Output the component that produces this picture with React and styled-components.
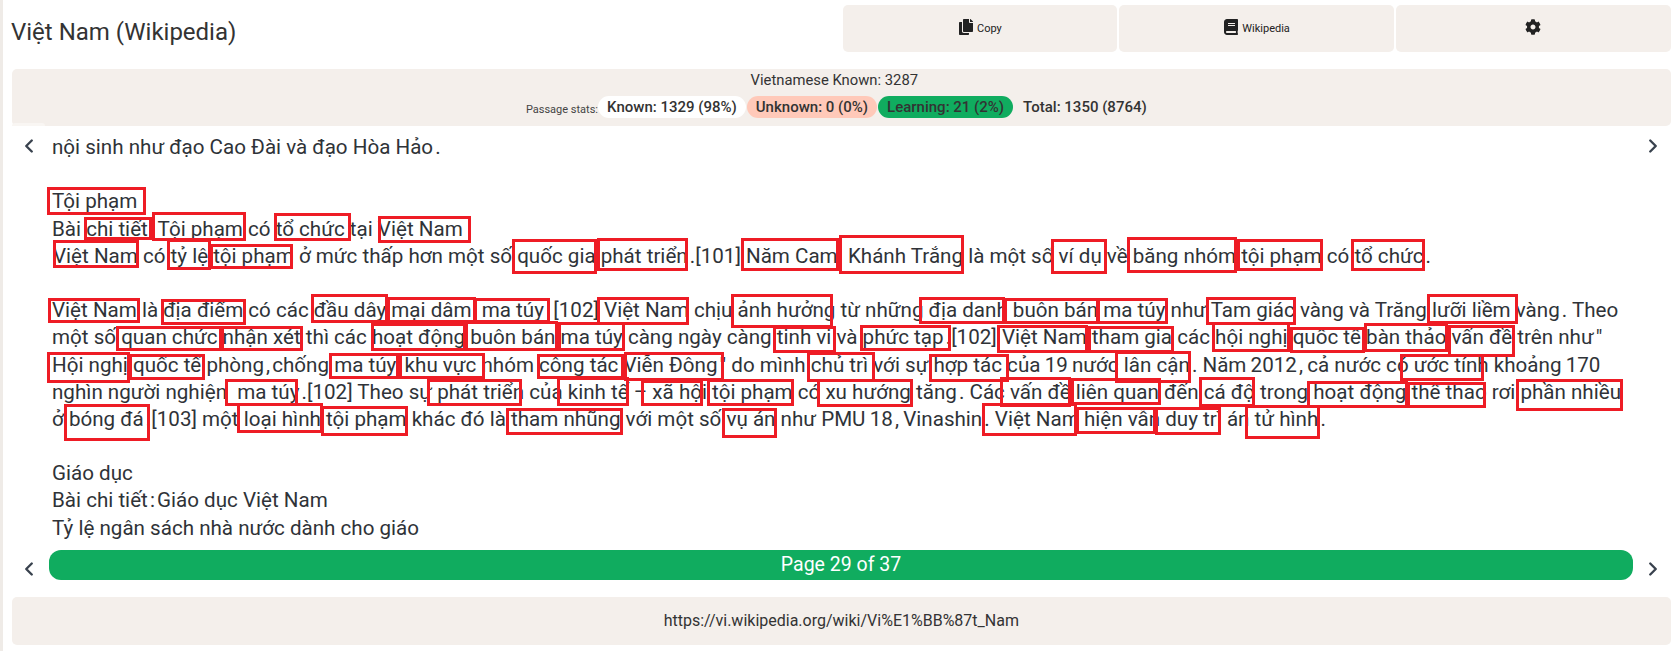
import styled, { createGlobalStyle } from "styled-components";
import { FaCopy, FaBook, FaCog } from "react-icons/fa";
import { ChevronLeft, ChevronRight } from "lucide-react";

const GlobalStyle = createGlobalStyle`
  html, body {
    margin: 0;
    padding: 0;
    background: #fff;
    font-family: Roboto, "Noto Sans", sans-serif;
    color: #2f3338;
  }
`;

const Page = styled.div`
  position: relative;
  width: 1675px;
  height: 651px;
  box-sizing: border-box;
  overflow: hidden;
  box-shadow: inset 3px 0 0 #efebe7;
  padding: 5px 4.4px 0 12px;
  display: flex;
  flex-direction: column;
`;

const Header = styled.header`
  display: flex;
  align-items: center;
  justify-content: space-between;
  height: 47px;
`;

const Title = styled.h1`
  margin: 0 0 -7px -1px;
  font-size: 24px;
  font-weight: 400;
  color: #333;
`;

const Actions = styled.div`
  display: flex;
  gap: 2px;
`;

const ActionButton = styled.button`
  width: 274.7px;
  height: 47px;
  padding: 0;
  border: 0;
  border-radius: 5px;
  background: #f4efeb;
  color: #222;
  font-family: inherit;
  font-size: 11px;
  display: flex;
  align-items: center;
  justify-content: center;
  gap: 3px;
  svg {
    font-size: 16px;
    margin-bottom: 4px;
  }
`;

const Stats = styled.section`
  position: relative;
  margin-top: 17px;
  height: 57px;
  border-radius: 5px;
  background: #f4efeb;
  display: flex;
  flex-direction: column;
  align-items: center;
  padding-top: 1px;
  box-sizing: border-box;
  &::after {
    content: "";
    position: absolute;
    left: 0;
    bottom: 0;
    width: 33px;
    height: 3px;
    border-radius: 3px 3px 0 0;
    background: #f9f6f3;
  }
`;

const KnownLine = styled.div`
  font-size: 14.8px;
  line-height: 20px;
  color: #333;
  margin-right: 14px;
`;

const PillRow = styled.div`
  display: flex;
  align-items: center;
  margin-top: 6px;
`;

const PillLabel = styled.span`
  font-size: 11px;
  color: #444;
  margin-top: 5px;
`;

const Pill = styled.span`
  height: 22px;
  padding: 0 9px;
  border-radius: 11px;
  background: ${(p) => p.$bg || "transparent"};
  font-size: 15px;
  font-weight: 500;
  line-height: 22px;
  margin-right: 1px;
  color: #333;
`;

const Reader = styled.div`
  display: flex;
  align-items: flex-start;
  flex: 1;
  min-height: 0;
`;

const Arrow = styled.div`
  width: ${(p) => (p.$side === "left" ? 37 : 37.6)}px;
  flex: none;
  display: flex;
  justify-content: center;
  color: #39424e;
  padding-top: ${(p) => p.$top || 0}px;
  padding-right: ${(p) => (p.$side === "left" ? 4 : 0)}px;
  padding-left: ${(p) => (p.$side === "right" ? 3 : 0)}px;
  box-sizing: border-box;
`;

const Passage = styled.div`
  flex: 1;
  min-width: 0;
  padding: 8px 0 0 3px;
  font-size: 20.6px;
  line-height: 27.2px;
`;

const Line = styled.div`
  white-space: pre;
  height: 27.2px;
  padding-left: ${(p) => p.$indent || 0}px;
`;

const PagerRow = styled.div`
  display: flex;
  align-items: center;
  height: 34px;
`;

const PageBar = styled.div`
  flex: 1;
  height: 30px;
  border-radius: 12px;
  background: #10ac5f;
  color: #fff;
  font-size: 19.5px;
  line-height: 30px;
  text-align: center;
  margin-top: -4px;
`;

const Footer = styled.footer`
  margin: 13px 0 6px;
  height: 48px;
  flex: none;
  border-radius: 5px;
  background: #f4efeb;
  font-size: 16px;
  color: #333;
  display: flex;
  align-items: center;
  justify-content: center;
  padding-bottom: 2px;
  box-sizing: border-box;
`;

// word boxes sit on top of the text, at the place the annotator drew them
const WordBox = styled.div`
  position: absolute;
  left: ${(p) => p.$x1}px;
  top: ${(p) => p.$y1}px;
  width: ${(p) => p.$x2 - p.$x1}px;
  height: ${(p) => p.$y2 - p.$y1}px;
  box-sizing: border-box;
  border: 3px solid #ee1c25;
  pointer-events: none;
`;

// the passage sets punctuation and numbers closer than a normal space
const hair = "\u200a";
const thin = "\u2009";

const lines = [
  { text: `nội sinh như đạo Cao Đài và đạo Hòa Hảo${hair}.` },
  { text: "" },
  { text: "Tội phạm" },
  { text: "Bài chi tiết  Tội phạm có tổ chức tại Việt Nam" },
  { text: `Việt Nam có tỷ lệ tội phạm ở mức thấp hơn một số quốc gia phát triển${hair}.[101] Năm Cam  Khánh Trắng là một số ví dụ về băng nhóm tội phạm có tổ chức${hair}.`, indent: 1 },
  { text: "" },
  { text: `Việt Nam là địa điểm có các đầu dây mại dâm  ma túy ${thin}[102] Việt Nam chịu ảnh hưởng từ những địa danh buôn bán ma túy như Tam giác vàng và Trăng lưỡi liềm vàng${hair}. Theo` },
  { text: `một số quan chức nhận xét thì các hoạt động buôn bán ma túy càng ngày càng tinh vi và phức tạp${hair}.[102] Việt Nam tham gia các hội nghị quốc tế bàn thảo vấn đề trên như${hair}"` },
  { text: `Hội nghị quốc tế phòng${hair},${hair}chống ma túy${hair},${hair}khu vực nhóm công tác Viễn Đông${hair}" do mình chủ trì với sự hợp tác của${thin}19${thin}nước lân cận${hair}. Năm${thin}2012${hair},${thin}cả nước có ước tính khoảng${thin}170` },
  { text: `nghìn người nghiện  ma túy${hair}.[102] Theo sự phát triển của kinh tế – xã hội tội phạm có xu hướng tăng${hair}. Các vấn đề liên quan đến cá độ trong hoạt động thể thao rơi phần nhiều` },
  { text: `ở bóng đá${hair}.[103] một loại hình tội phạm khác đó là tham nhũng với một số vụ án như PMU${thin}18${hair},${thin}Vinashin${hair}. Việt Nam${thin}hiện vẫn duy trì án tử hình${hair}.` },
  { text: "" },
  { text: "Giáo dục" },
  { text: `Bài chi tiết${hair}:${hair}Giáo dục Việt Nam` },
  { text: "Tỷ lệ ngân sách nhà nước dành cho giáo" },
];

// x1, y1, x2, y2 in page pixels
const boxes = [
  [47, 187, 146, 215], [84, 217, 152, 240], [152, 212, 246, 241], [274, 213, 351, 241], [378, 216, 471, 243],
  [53, 240, 139, 268], [167, 239, 211, 270], [210, 244, 293, 269], [512, 239, 597, 274], [597, 238, 688, 271],
  [741, 238, 839, 271], [839, 235, 964, 274], [1051, 239, 1107, 274], [1127, 237, 1237, 273], [1237, 239, 1323, 271], [1351, 239, 1425, 271],
  [48, 298, 140, 323], [161, 299, 246, 325], [311, 294, 388, 323], [387, 297, 476, 323], [474, 298, 550, 323],
  [597, 297, 689, 325], [731, 294, 833, 328], [919, 297, 1005, 324], [1004, 298, 1099, 324], [1097, 298, 1168, 324],
  [1206, 297, 1296, 325], [1427, 294, 1518, 324],
  [116, 326, 222, 351], [221, 326, 303, 351], [371, 323, 466, 351], [465, 321, 558, 351], [558, 322, 625, 351],
  [773, 326, 836, 353], [860, 325, 951, 351], [997, 325, 1088, 353], [1088, 326, 1174, 353], [1212, 322, 1290, 352],
  [1290, 327, 1365, 353], [1364, 323, 1448, 352], [1448, 325, 1515, 357],
  [47, 352, 130, 383], [129, 354, 205, 380], [329, 353, 399, 379], [399, 353, 485, 379], [537, 354, 624, 379],
  [624, 352, 724, 381], [807, 352, 875, 382], [929, 354, 1009, 382], [1115, 351, 1191, 383], [1400, 354, 1484, 381],
  [225, 379, 298, 406], [427, 379, 522, 406], [557, 377, 629, 406], [641, 380, 703, 406], [707, 379, 794, 406],
  [817, 379, 913, 407], [1000, 377, 1071, 407], [1071, 378, 1161, 405], [1199, 377, 1255, 407], [1307, 381, 1408, 408],
  [1407, 382, 1486, 408], [1516, 379, 1623, 411],
  [64, 404, 150, 441], [237, 403, 323, 433], [321, 406, 408, 436], [506, 408, 623, 435], [722, 408, 777, 438],
  [982, 403, 1077, 436], [1076, 407, 1156, 434], [1155, 407, 1221, 435], [1245, 405, 1320, 439],
];

export default function App() {
  return (
    <>
      <GlobalStyle />
      <Page>
        <Header>
          <Title>Việt Nam (Wikipedia)</Title>
          <Actions>
            <ActionButton>
              <FaCopy /> Copy
            </ActionButton>
            <ActionButton>
              <FaBook /> Wikipedia
            </ActionButton>
            <ActionButton>
              <FaCog />
            </ActionButton>
          </Actions>
        </Header>
        <Stats>
          <KnownLine>Vietnamese Known: 3287</KnownLine>
          <PillRow>
            <PillLabel>Passage stats:</PillLabel>
            <Pill $bg="#fff">Known: 1329 (98%)</Pill>
            <Pill $bg="#ffc9b9">Unknown: 0 (0%)</Pill>
            <Pill $bg="#10ac5f">Learning: 21 (2%)</Pill>
            <Pill>Total: 1350 (8764)</Pill>
          </PillRow>
        </Stats>
        <Reader>
          <Arrow $side="left" $top={9}>
            <ChevronLeft size={22} strokeWidth={2.6} />
          </Arrow>
          <Passage>
            {lines.map((line, i) => (
              <Line key={i} $indent={line.indent}>
                {line.text}
              </Line>
            ))}
          </Passage>
          <Arrow $side="right" $top={9}>
            <ChevronRight size={22} strokeWidth={2.6} />
          </Arrow>
        </Reader>
        <PagerRow>
          <Arrow $side="left" $top={3}>
            <ChevronLeft size={22} strokeWidth={2.6} />
          </Arrow>
          <PageBar>Page 29 of 37</PageBar>
          <Arrow $side="right" $top={3}>
            <ChevronRight size={22} strokeWidth={2.6} />
          </Arrow>
        </PagerRow>
        <Footer>https://vi.wikipedia.org/wiki/Vi%E1%BB%87t_Nam</Footer>
        {boxes.map(([x1, y1, x2, y2], i) => (
          <WordBox key={i} $x1={x1} $y1={y1} $x2={x2} $y2={y2} />
        ))}
      </Page>
    </>
  );
}
